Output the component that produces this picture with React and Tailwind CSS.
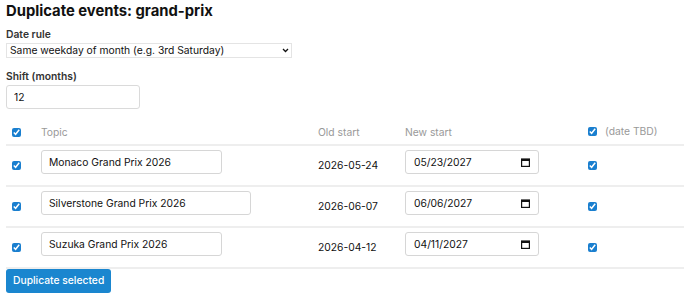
import React from "react";

const rows = [
  { topic: "Monaco Grand Prix 2026", old: "2026-05-24", next: "05/23/2027", w: "w-[181px]" },
  { topic: "Silverstone Grand Prix 2026", old: "2026-06-07", next: "06/06/2027", w: "w-[210px]" },
  { topic: "Suzuka Grand Prix 2026", old: "2026-04-12", next: "04/11/2027", w: "w-[181px]" },
];

const Check = () => (
  <input
    type="checkbox"
    defaultChecked
    className="w-[9px] h-[9px] m-0 align-middle accent-[#1a7fcf]"
  />
);

const CalendarIcon = () => (
  <svg width="9" height="9" viewBox="0 0 9 9" className="absolute right-[9px] top-[8px]">
    <rect x="0.6" y="1" width="7.8" height="7.4" fill="none" stroke="#111" strokeWidth="1.2" />
    <rect x="0.6" y="1" width="7.8" height="2" fill="#111" />
  </svg>
);

export default function App() {
  return (
    <div
      className="px-[6px] text-[#222] text-[10.3px]"
      style={{ fontFamily: "Inter, 'Noto Sans', sans-serif" }}
    >
      <h1 className="text-[14.8px] font-bold leading-[22px] h-[22px] text-[#111]">Duplicate events: grand-prix</h1>

      <div className="mt-[6px] font-semibold text-[#333] leading-[13px]">Date rule</div>
      <div className="relative mt-[2px] w-[286px]">
        <div className="h-[15px] border border-[#e4e4e4] bg-white pl-[3px] leading-[13px] text-[#111]">
          Same weekday of month (e.g. 3rd Saturday)
        </div>
        <svg width="7" height="5" viewBox="0 0 7 5" className="absolute right-[3px] top-[5px]">
          <path d="M1 1l2.5 2.5L6 1" fill="none" stroke="#111" strokeWidth="1.3" />
        </svg>
      </div>

      <div className="mt-[12px] font-semibold text-[#333] leading-[13px]">Shift (months)</div>
      <input
        readOnly
        value="12"
        className="mt-[2px] block w-[134px] h-[24px] border border-[#dadada] rounded-[3px] px-[7px] text-[10.3px] text-[#111] outline-none"
      />

      <table className="mt-[8px] w-[678px] border-collapse">
        <colgroup>
          <col className="w-[29px]" />
          <col className="w-[277px]" />
          <col className="w-[87px]" />
          <col className="w-[183px]" />
          <col />
        </colgroup>
        <thead>
          <tr className="border-b-2 border-[#eeeeee] h-[28px]">
            <th className="text-left pl-[6px] pt-[4px] align-middle"><Check /></th>
            <th className="text-left pl-[6px] pt-[4px] font-normal text-[#999]">Topic</th>
            <th className="text-left pl-[6px] pt-[4px] font-normal text-[#999]">Old start</th>
            <th className="text-left pl-[6px] pt-[4px] font-normal text-[#999]">New start</th>
            <th className="text-left pl-[6px] pt-[4px] font-normal text-[#999]">
              <span className="inline-flex items-center gap-[8px]"><Check />(date TBD)</span>
            </th>
          </tr>
        </thead>
        <tbody>
          {rows.map((r) => (
            <tr key={r.topic} className="border-b-2 border-[#eeeeee] h-[41px]">
              <td className="pl-[6px] align-middle"><Check /></td>
              <td className="pl-[6px] align-top pt-[4px]">
                <input
                  readOnly
                  value={r.topic}
                  className={`block ${r.w} h-[24px] border border-[#d6d6d6] rounded-[3px] px-[7px] text-[10.3px] text-[#111] outline-none`}
                />
              </td>
              <td className="pl-[6px] align-middle text-[#111]">{r.old}</td>
              <td className="pl-[6px] align-top pt-[4px]">
                <div className="relative w-[134px]">
                  <input
                    readOnly
                    value={r.next}
                    className="block w-[134px] h-[24px] border border-[#d6d6d6] rounded-[3px] px-[8px] text-[10.3px] text-[#111] outline-none"
                  />
                  <CalendarIcon />
                </div>
              </td>
              <td className="pl-[6px] align-middle"><Check /></td>
            </tr>
          ))}
        </tbody>
      </table>

      <button className="block h-[24px] px-[7px] rounded-[3px] bg-[#1a86cf] text-white text-[10.3px] font-medium">
        Duplicate selected
      </button>
    </div>
  );
}
